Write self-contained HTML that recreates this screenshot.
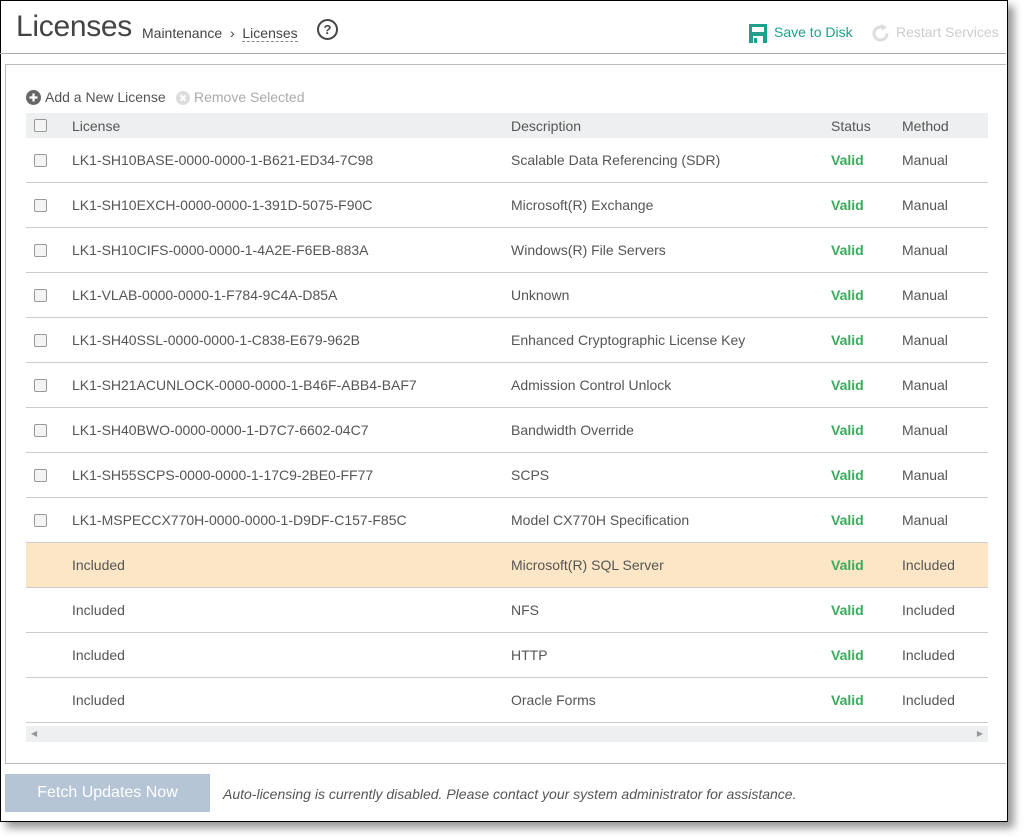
<!DOCTYPE html><html><head><style>
body{margin:0;width:1024px;height:837px;background:#fff;font-family:"Liberation Sans",sans-serif;position:relative;overflow:hidden;color:#555}
.frame{position:absolute;left:0;top:0;width:1006px;height:820px;border:1px solid #000;box-shadow:6px 6px 8px #999;background:#fff}
.a{position:absolute;white-space:nowrap}
.hl{position:absolute;left:0;top:53px;width:1006px;border-top:1px solid #aaa}
.panel{position:absolute;left:5px;top:64px;width:1000px;height:698px;border:1px solid #bbb;border-right:none}
table{position:absolute;left:26px;top:113px;width:962px;border-collapse:collapse;font-size:14px}
td{height:44px;border-bottom:1px solid #ccc;padding:0;color:#555}
tr.h td{height:25px;background:#eeeff0;border:none}
.cb{width:11px;height:11px;border:1px solid #999;border-radius:2px;background:#f4f4f4;margin-left:8px}
.v{color:#3aaa5c;font-weight:bold}
tr.o td{background:#fde6c5}
</style></head><body>
<div class="frame"></div>
<div class="a" style="left:16px;top:10px;font-size:30px;color:#444;letter-spacing:-0.3px">Licenses</div>
<div class="a" style="left:142px;top:25px;font-size:14px;color:#444">Maintenance &nbsp;›&nbsp; <span style="border-bottom:1px dashed #888">Licenses</span></div>
<div class="a" style="left:317px;top:19px;width:17px;height:17px;border:2px solid #444;border-radius:50%;font-size:13px;font-weight:bold;text-align:center;line-height:17px;color:#444">?</div>
<svg class="a" style="left:749px;top:24px" width="18" height="19"><path d="M0 0h18v19h-18z" fill="#1ea08a"/><rect x="3" y="3" width="12" height="5" fill="#fff"/><rect x="4" y="12" width="10" height="7" fill="#fff"/><rect x="5" y="14" width="3" height="5" fill="#1ea08a"/></svg>
<div class="a" style="left:774px;top:24px;font-size:14px;color:#1ea08a">Save to Disk</div>
<svg class="a" style="left:871px;top:24px" width="19" height="19"><path d="M16 9.5A6.5 6.5 0 1 1 12 3.5" stroke="#ddd" stroke-width="3" fill="none"/><path d="M10 0l6 3-5 4z" fill="#ddd"/></svg>
<div class="a" style="left:896px;top:24px;font-size:14px;color:#ccc">Restart Services</div>
<div class="hl"></div>
<div class="panel"></div>
<svg class="a" style="left:26px;top:90px" width="15" height="15"><circle cx="7.5" cy="7.5" r="7.5" fill="#666"/><path d="M7.5 3.5v8M3.5 7.5h8" stroke="#fff" stroke-width="2.2"/></svg>
<div class="a" style="left:45px;top:89px;font-size:14px;color:#555">Add a New License</div>
<svg class="a" style="left:176px;top:91px" width="14" height="14"><circle cx="7" cy="7" r="7" fill="#ddd"/><path d="M4.5 4.5l5 5M9.5 4.5l-5 5" stroke="#fff" stroke-width="2"/></svg>
<div class="a" style="left:194px;top:89px;font-size:14px;color:#aaa">Remove Selected</div>
<table>
<tr class="h"><td style="width:46px"><div class="cb"></div></td><td style="width:439px">License</td><td style="width:320px">Description</td><td style="width:71px">Status</td><td>Method</td></tr>
<tr><td><div class="cb"></div></td><td>LK1-SH10BASE-0000-0000-1-B621-ED34-7C98</td><td>Scalable Data Referencing (SDR)</td><td class="v">Valid</td><td>Manual</td></tr>
<tr><td><div class="cb"></div></td><td>LK1-SH10EXCH-0000-0000-1-391D-5075-F90C</td><td>Microsoft(R) Exchange</td><td class="v">Valid</td><td>Manual</td></tr>
<tr><td><div class="cb"></div></td><td>LK1-SH10CIFS-0000-0000-1-4A2E-F6EB-883A</td><td>Windows(R) File Servers</td><td class="v">Valid</td><td>Manual</td></tr>
<tr><td><div class="cb"></div></td><td>LK1-VLAB-0000-0000-1-F784-9C4A-D85A</td><td>Unknown</td><td class="v">Valid</td><td>Manual</td></tr>
<tr><td><div class="cb"></div></td><td>LK1-SH40SSL-0000-0000-1-C838-E679-962B</td><td>Enhanced Cryptographic License Key</td><td class="v">Valid</td><td>Manual</td></tr>
<tr><td><div class="cb"></div></td><td>LK1-SH21ACUNLOCK-0000-0000-1-B46F-ABB4-BAF7</td><td>Admission Control Unlock</td><td class="v">Valid</td><td>Manual</td></tr>
<tr><td><div class="cb"></div></td><td>LK1-SH40BWO-0000-0000-1-D7C7-6602-04C7</td><td>Bandwidth Override</td><td class="v">Valid</td><td>Manual</td></tr>
<tr><td><div class="cb"></div></td><td>LK1-SH55SCPS-0000-0000-1-17C9-2BE0-FF77</td><td>SCPS</td><td class="v">Valid</td><td>Manual</td></tr>
<tr><td><div class="cb"></div></td><td>LK1-MSPECCX770H-0000-0000-1-D9DF-C157-F85C</td><td>Model CX770H Specification</td><td class="v">Valid</td><td>Manual</td></tr>
<tr class="o"><td></td><td>Included</td><td>Microsoft(R) SQL Server</td><td class="v">Valid</td><td>Included</td></tr>
<tr><td></td><td>Included</td><td>NFS</td><td class="v">Valid</td><td>Included</td></tr>
<tr><td></td><td>Included</td><td>HTTP</td><td class="v">Valid</td><td>Included</td></tr>
<tr><td></td><td>Included</td><td>Oracle Forms</td><td class="v">Valid</td><td>Included</td></tr>
</table>
<div class="a" style="left:26px;top:726px;width:962px;height:16px;background:#eeeff0;font-size:8px;color:#999;line-height:16px"><span style="margin-left:5px">◀</span><span style="float:right;margin-right:5px">▶</span></div>
<div class="a" style="left:5px;top:774px;width:205px;height:38px;background:#b5c5d5;color:#fff;font-size:16px;text-align:center;line-height:38px">Fetch Updates Now</div>
<div class="a" style="left:223px;top:786px;font-size:14px;font-style:italic;color:#555">Auto-licensing is currently disabled. Please contact your system administrator for assistance.</div>
</body></html>
